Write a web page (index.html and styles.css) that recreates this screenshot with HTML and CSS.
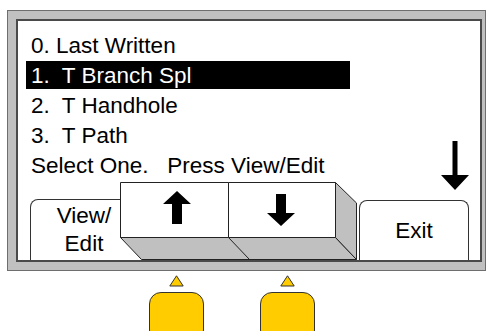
FILE: index.html
```html
<!DOCTYPE html>
<html lang="en">
<head>
    <meta charset="UTF-8">
    <meta name="viewport" content="width=device-width, initial-scale=1.0">
    <title>Select Menu</title>
    <link rel="stylesheet" href="styles.css">
</head>
<body>

    <div class="device">
        <div class="bezel">
            <div class="screen">

                <!-- Menu list -->
                <ul class="menu">
                    <li>0. Last Written</li>
                    <li class="selected">1.  T Branch Spl</li>
                    <li>2.  T Handhole</li>
                    <li>3.  T Path</li>
                </ul>
                <p class="prompt">Select One.   Press View/Edit</p>

                <!-- More items below -->
                <svg class="more-arrow" width="30" height="50" viewBox="0 0 30 50">
                    <path d="M12.5 0 H17.5 V34 H29 L15 49 L1 34 H12.5 Z" fill="#000"/>
                </svg>

                <!-- Soft keys -->
                <div class="softkeys">
                    <div class="tab tab-view">View/<br>Edit</div>
                    <svg class="keys" width="237" height="78" viewBox="0 0 237 78">
                        <g stroke="#222" stroke-width="1" stroke-linejoin="round">
                            <polygon points="0.5,55.5 215.5,55.5 236.5,77.5 21.5,77.5" fill="#c0c0c0"/>
                            <line x1="108.5" y1="55.5" x2="129.5" y2="77.5"/>
                            <polygon points="215.5,0.5 236.5,21 236.5,77.5 215.5,55.5" fill="#c0c0c0"/>
                            <rect x="0.5" y="0.5" width="108" height="55" fill="#fff"/>
                            <rect x="108.5" y="0.5" width="107" height="55" fill="#fff"/>
                        </g>
                        <path d="M57 9 L71 22 H62 V42 H52 V22 H43 Z" fill="#000"/>
                        <path d="M156 12 H166 V31 H175 L161 44 L147 31 H156 Z" fill="#000"/>
                    </svg>
                    <div class="tab tab-exit">Exit</div>
                </div>

            </div>
        </div>

        <!-- Hardware buttons -->
        <div class="hw-row">
            <div class="hw">
                <svg class="hw-tri" width="15" height="12" viewBox="0 0 15 12">
                    <polygon points="0.8,11 7.5,0.8 14.2,11" fill="#ffcc00" stroke="#333" stroke-width="1"/>
                </svg>
                <div class="hw-pad"></div>
            </div>
            <div class="hw">
                <svg class="hw-tri" width="15" height="12" viewBox="0 0 15 12">
                    <polygon points="0.8,11 7.5,0.8 14.2,11" fill="#ffcc00" stroke="#333" stroke-width="1"/>
                </svg>
                <div class="hw-pad"></div>
            </div>
        </div>
    </div>

</body>
</html>
```

FILE: styles.css
```css
/* Handheld display mockup */
body {
    margin: 0;
    background: #fff;
    font-family: "Liberation Sans", Arial, sans-serif;
    color: #000;
}

.device {
    width: 488px;
    height: 331px;
    overflow: hidden;
}

.bezel {
    box-sizing: border-box;
    width: 479px;
    height: 261px;
    margin: 10px 0 0 7px;
    padding: 8px 3px 8px 8px;
    background-color: #c0c0c0;
    border: 1px solid #6e6e6e;
}

.screen {
    position: relative;
    box-sizing: border-box;
    height: 100%;
    padding-top: 10px;
    background-color: #fff;
    border: 2px solid #4a4a4a;
    display: flex;
    flex-direction: column;
}

.menu {
    list-style: none;
    margin: 0;
    padding: 0 0 0 8px;
}

.menu li,
.prompt {
    box-sizing: border-box;
    width: 324px;
    height: 30px;
    padding-left: 5px;
    font-size: 22.5px;
    line-height: 29px;
    white-space: pre;
}

.menu li.selected {
    background-color: #000;
    color: #fff;
    height: 28px;
    margin-bottom: 2px;
}

.prompt {
    width: auto;
    margin: 0 0 0 8px;
}

.more-arrow {
    position: absolute;
    left: 422px;
    top: 120px;
}

.softkeys {
    margin-top: auto;
    height: 78px;
    padding-left: 12px;
    display: flex;
    align-items: flex-end;
}

.tab {
    box-sizing: border-box;
    flex: none;
    background-color: #fff;
    border: 1px solid #333;
    border-bottom: none;
    display: flex;
    align-items: center;
    justify-content: center;
    text-align: center;
    font-size: 22.5px;
}

.tab-view {
    width: 113px;
    height: 61px;
    padding-right: 5px;
    line-height: 28px;
    border-top-left-radius: 8px;
}

.keys {
    flex: none;
    display: block;
    margin-left: -23px;
}

.tab-exit {
    width: 110px;
    height: 60px;
    margin-left: 2px;
    border-radius: 8px 8px 0 0;
}

.hw-row {
    display: flex;
    gap: 56px;
    padding-left: 149px;
    margin-top: 4px;
}

.hw {
    width: 55px;
    display: flex;
    flex-direction: column;
    align-items: center;
}

.hw-tri {
    display: block;
    margin-bottom: 5px;
}

.hw-pad {
    box-sizing: border-box;
    width: 55px;
    height: 50px;
    background-color: #ffcc00;
    border: 1.5px solid #333;
    border-radius: 12px;
}
```
